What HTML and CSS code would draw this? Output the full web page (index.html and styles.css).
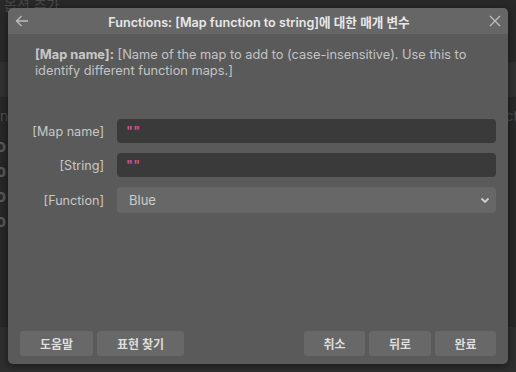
FILE: index.html
```html
<!DOCTYPE html>
<html lang="ko">
<head>
<meta charset="utf-8">
<link rel="stylesheet" href="styles.css">
</head>
<body>
<div class="app">
  <div class="app-top"><span class="app-title">옵션 추가</span></div>
  <div class="app-band"></div>
  <div class="app-list">
    <div class="app-row"><span>na</span><span class="right">ct</span></div>
    <div class="app-row icon">ↄ</div>
    <div class="app-row icon">ↄ</div>
    <div class="app-row icon">ↄ</div>
    <div class="app-row icon">ↄ</div>
  </div>
  <div class="app-band bottom"></div>
</div>

<div class="dialog">
  <div class="dlg-head">
    <svg class="back" width="14" height="12" viewBox="0 0 14 12"><path d="M13 6H1.5M6.5 1L1.5 6l5 5" fill="none" stroke="#bdbdbd" stroke-width="1.3"/></svg>
    <div class="dlg-title">Functions: [Map function to string]에 대한 매개 변수</div>
    <svg class="close" width="12" height="12" viewBox="0 0 12 12"><path d="M1 1l10 10M11 1L1 11" fill="none" stroke="#bdbdbd" stroke-width="1.3"/></svg>
  </div>
  <div class="dlg-body">
    <p class="desc"><b>[Map name]:</b> [Name of the map to add to (case-insensitive). Use this to identify different function maps.]</p>
    <div class="form">
      <label class="lbl">[Map name]</label>
      <div class="field input"><span class="q">""</span></div>
      <label class="lbl">[String]</label>
      <div class="field input"><span class="q">""</span></div>
      <label class="lbl">[Function]</label>
      <div class="field select"><span>Blue</span>
        <svg width="10" height="7" viewBox="0 0 10 7"><path d="M1.5 1.5l3.5 3.5 3.5-3.5" fill="none" stroke="#cfcfcf" stroke-width="1.8"/></svg>
      </div>
    </div>
  </div>
  <div class="dlg-foot">
    <button class="btn w73">도움말</button>
    <button class="btn w87">표현 찾기</button>
    <span class="spacer"></span>
    <button class="btn w61">취소</button>
    <button class="btn w62">뒤로</button>
    <button class="btn w61">완료</button>
  </div>
</div>
</body>
</html>
```
FILE: styles.css
```css
html, body {
  margin: 0;
  padding: 0;
}
body {
  width: 516px;
  height: 372px;
  background: #282828;
  font-family: Inter, "Noto Sans", "Noto Sans CJK KR", sans-serif;
  overflow: hidden;
  position: relative;
}
.app {
  display: flex;
  flex-direction: column;
  height: 372px;
}
.app-top {
  height: 62px;
  background: #292929;
}
.app-title {
  display: block;
  margin: -6px 0 0 4px;
  color: #4a4a4a;
  font-size: 14px;
}
.app-band {
  height: 35px;
  background: #323232;
}
.app-band.bottom {
  height: 45px;
  background: #2f2f2f;
  margin-top: auto;
}
.app-list {
  display: flex;
  flex-direction: column;
  padding-top: 10px;
}
.app-row {
  height: 28px;
  display: flex;
  justify-content: space-between;
  color: #4d4d4d;
  font-size: 14px;
}
.app-row.icon {
  height: 25px;
  color: #5a5a5a;
  font-weight: bold;
  font-size: 18px;
  margin-left: -4px;
}
.app-row .right {
  margin-right: -2px;
}

.dialog {
  position: absolute;
  left: 8px;
  top: 8px;
  width: 500px;
  height: 356px;
  background: #5a5a5a;
  border-radius: 5px;
  overflow: hidden;
  display: flex;
  flex-direction: column;
  box-shadow: 0 2px 10px rgba(0,0,0,0.5);
}
.dlg-head {
  height: 26px;
  background: #666666;
  display: flex;
  align-items: center;
  padding: 0 7px 0 7px;
  box-sizing: border-box;
}
.back {
  flex: none;
}
.close {
  flex: none;
}
.dlg-title {
  flex: 1;
  text-align: center;
  color: #e8e8e8;
  font-size: 12.6px;
  font-weight: 600;
  white-space: nowrap;
}
.dlg-body {
  padding: 13px 12px 0 27px;
}
.desc {
  margin: 0;
  color: #c4c4c4;
  font-size: 12.8px;
  line-height: 16px;
}
.desc b {
  font-weight: 700;
  color: #c8c8c8;
}
.form {
  margin: 40px 0 0 -9px;
  display: grid;
  grid-template-columns: 78px 1fr;
  column-gap: 13px;
  row-gap: 10px;
  align-items: center;
}
.lbl {
  text-align: right;
  color: #c8c8c8;
  font-size: 12.6px;
  white-space: nowrap;
}
.field {
  border-radius: 4px;
  display: flex;
  align-items: center;
  box-sizing: border-box;
  font-size: 13px;
}
.input {
  height: 24px;
  background: #3a3a3a;
  padding-left: 9px;
}
.q {
  color: #e64a9b;
  font-weight: 600;
  letter-spacing: 0.5px;
}
.select {
  height: 26px;
  background: #676767;
  padding: 0 6px 0 12px;
  justify-content: space-between;
  color: #cccccc;
}
.dlg-foot {
  margin-top: auto;
  display: flex;
  gap: 4px;
  padding: 0 12px 8px 12px;
}
.spacer {
  flex: 1;
}
.btn {
  height: 25px;
  border: none;
  border-radius: 3px;
  background: #686868;
  color: #dedede;
  font-family: Inter, "Noto Sans", "Noto Sans CJK KR", sans-serif;
  font-size: 12px;
  font-weight: 600;
  padding: 0;
}
.w73 { width: 73px; }
.w87 { width: 87px; }
.w61 { width: 61px; }
.w62 { width: 62px; }
```
